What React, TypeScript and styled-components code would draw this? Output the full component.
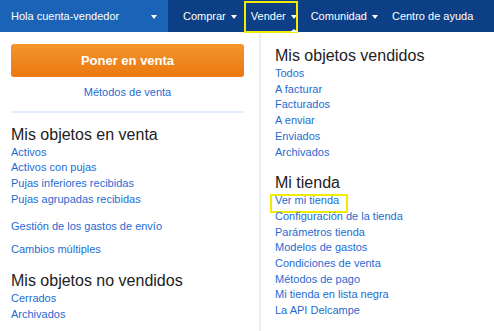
import styled, { createGlobalStyle } from 'styled-components';

const GlobalStyle = createGlobalStyle`
  html, body {
    margin: 0;
    padding: 0;
    background: #fff;
  }
  body {
    font-family: "Liberation Sans", Arial, sans-serif;
  }
  * {
    box-sizing: border-box;
  }
`;

const Page = styled.div`
  width: 494px;
  height: 331px;
  overflow: hidden;
  background: #fff;
`;

const Nav = styled.nav`
  display: flex;
  height: 32px;
  background: #0d3f86;
  color: #fff;
  font-size: 11px;
  line-height: 32px;
`;

const Account = styled.div`
  width: 168px;
  padding: 0 11px;
  background: #1b63b6;
  display: flex;
  align-items: center;
  justify-content: space-between;
`;

const Menu = styled.div`
  display: flex;
  padding-left: 8px;
`;

const MenuItem = styled.div<{ $active?: boolean }>`
  position: relative;
  display: flex;
  align-items: center;
  gap: 5px;
  padding: 0 7px;
  cursor: pointer;

  ${({ $active }) =>
    $active &&
    `
    &::before {
      content: '';
      position: absolute;
      left: 0;
      right: 6px;
      top: 1px;
      height: 28px;
      border: 2px solid #f2ec00;
    }
    &::after {
      content: '';
      position: absolute;
      bottom: 0;
      right: 6px;
      border-left: 4px solid transparent;
      border-right: 4px solid transparent;
      border-bottom: 3px solid #fff;
    }
  `}
`;

const Caret = styled.span`
  display: inline-block;
  width: 0;
  height: 0;
  border-left: 3.5px solid transparent;
  border-right: 3.5px solid transparent;
  border-top: 4px solid #fff;
  margin-top: 1px;
`;

const Columns = styled.div`
  display: flex;
  height: 299px;
`;

const LeftColumn = styled.div`
  width: 261px;
  padding: 12px 15px 0 11px;
  border-right: 2px solid #e6f0fb;
`;

const RightColumn = styled.div`
  flex: 1;
  padding: 14px 0 0 14px;
`;

const SellButton = styled.button`
  display: block;
  width: 100%;
  height: 33px;
  border: none;
  border-radius: 3px;
  background: linear-gradient(#f3952a, #eb7811);
  color: #fff;
  font-family: inherit;
  font-size: 13px;
  font-weight: bold;
  cursor: pointer;
`;

const CenterLink = styled.a`
  display: block;
  margin-top: 8px;
  text-align: center;
  font-size: 11px;
  line-height: 15.7px;
  color: #1f6bd3;
  text-decoration: none;
`;

const Divider = styled.hr`
  margin: 10px 0 0;
  border: none;
  height: 2px;
  background: #e4effb;
`;

const Heading = styled.h3<{ $gap?: number }>`
  margin: ${({ $gap }) => $gap ?? 0}px 0 0;
  font-size: 16px;
  font-weight: normal;
  line-height: 20px;
  color: #222;
`;

const LinkList = styled.ul<{ $gap?: number }>`
  list-style: none;
  margin: ${({ $gap }) => $gap ?? 0}px 0 0;
  padding: 0;
`;

const LinkItem = styled.li<{ $marked?: boolean }>`
  position: relative;
  font-size: 11px;
  line-height: 15.7px;

  ${({ $marked }) =>
    $marked &&
    `
    & > a { position: relative; }
    & > a::after {
      content: '';
      position: absolute;
      left: -5px;
      right: -9px;
      top: 0;
      height: 15px;
      border: 2px solid #f2ec00;
    }
  `}
`;

const Link = styled.a`
  color: #1f6bd3;
  text-decoration: none;
  cursor: pointer;
`;

const menu = ['Comprar', 'Vender', 'Comunidad'];

const onSale = ['Activos', 'Activos con pujas', 'Pujas inferiores recibidas', 'Pujas agrupadas recibidas'];
const unsold = ['Cerrados', 'Archivados'];
const sold = ['Todos', 'A facturar', 'Facturados', 'A enviar', 'Enviados', 'Archivados'];
const shop = [
  'Ver mi tienda',
  'Configuración de la tienda',
  'Parámetros tienda',
  'Modelos de gastos',
  'Condiciones de venta',
  'Métodos de pago',
  'Mi tienda en lista negra',
  'La API Delcampe',
];

const Links = ({ items, gap, marked }: { items: string[]; gap?: number; marked?: string }) => (
  <LinkList $gap={gap}>
    {items.map((item) => (
      <LinkItem key={item} $marked={item === marked}>
        <Link>{item}</Link>
      </LinkItem>
    ))}
  </LinkList>
);

export default function App() {
  return (
    <Page>
      <GlobalStyle />
      <Nav>
        <Account>
          <span>Hola cuenta-vendedor</span>
          <Caret />
        </Account>
        <Menu>
          {menu.map((item) => (
            <MenuItem key={item} $active={item === 'Vender'}>
              <span>{item}</span>
              <Caret />
            </MenuItem>
          ))}
          <MenuItem>
            <span>Centro de ayuda</span>
          </MenuItem>
        </Menu>
      </Nav>

      <Columns>
        <LeftColumn>
          <SellButton>Poner en venta</SellButton>
          <CenterLink>Métodos de venta</CenterLink>
          <Divider />

          <Heading $gap={12}>Mis objetos en venta</Heading>
          <Links items={onSale} />
          <Links items={['Gestión de los gastos de envío']} gap={11} />
          <Links items={['Cambios múltiples']} gap={8} />

          <Heading $gap={13}>Mis objetos no vendidos</Heading>
          <Links items={unsold} />
        </LeftColumn>

        <RightColumn>
          <Heading>Mis objetos vendidos</Heading>
          <Links items={sold} />

          <Heading $gap={13}>Mi tienda</Heading>
          <Links items={shop} marked="Ver mi tienda" />
        </RightColumn>
      </Columns>
    </Page>
  );
}
